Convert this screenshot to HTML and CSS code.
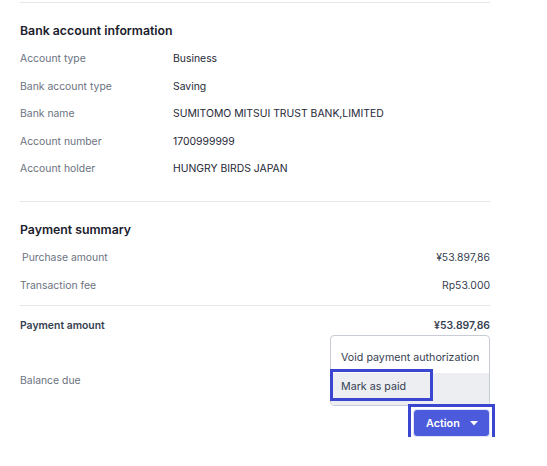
FILE: index.html
```html
<!DOCTYPE html>
<html lang="en">
<head>
<meta charset="utf-8">
<title>Payment details</title>
<link rel="stylesheet" href="styles.css">
</head>
<body>
<div class="page">
  <div class="rule rule-top"></div>
  <section class="sec sec-bank">
    <h2 class="sec-title">Bank account information</h2>
    <div class="kv">
      <div class="kv-row"><span class="kv-label">Account type</span><span class="kv-value">Business</span></div>
      <div class="kv-row"><span class="kv-label">Bank account type</span><span class="kv-value">Saving</span></div>
      <div class="kv-row"><span class="kv-label">Bank name</span><span class="kv-value">SUMITOMO MITSUI TRUST BANK,LIMITED</span></div>
      <div class="kv-row"><span class="kv-label">Account number</span><span class="kv-value">1700999999</span></div>
      <div class="kv-row"><span class="kv-label">Account holder</span><span class="kv-value">HUNGRY BIRDS JAPAN</span></div>
    </div>
  </section>
  <div class="rule"></div>
  <section class="sec sec-summary">
    <h2 class="sec-title">Payment summary</h2>
    <div class="sum-row sum-indent"><span class="sum-label">Purchase amount</span><span class="sum-value">¥53.897,86</span></div>
    <div class="sum-row"><span class="sum-label">Transaction fee</span><span class="sum-value">Rp53.000</span></div>
  </section>
  <div class="rule rule-summary"></div>
  <div class="sum-row sum-total"><span class="sum-label">Payment amount</span><span class="sum-value">¥53.897,86</span></div>
  <div class="sum-row sum-balance"><span class="sum-label">Balance due</span><span class="sum-value"></span></div>
  <div class="actions">
    <div class="action-wrap">
      <div class="menu">
        <div class="menu-item">Void payment authorization</div>
        <div class="menu-item menu-item-active">Mark as paid<span class="mark mark-item"></span></div>
      </div>
      <button class="btn-action" type="button">Action
        <svg class="caret" width="8" height="5" viewBox="0 0 8 5"><path d="M0 0h8L4 4.5z" fill="#fff"/></svg>
      </button>
      <span class="mark mark-btn"></span>
    </div>
  </div>
</div>
</body>
</html>
```

FILE: styles.css
```css
* { box-sizing: border-box; }
html, body { margin: 0; padding: 0; background: #fff; }
body {
  font-family: Inter, "Noto Sans", "Liberation Sans", sans-serif;
  color: #1f2937;
}
.page {
  width: 470px;
  margin-left: 20px;
}
.rule {
  height: 1px;
  background: #e5e7eb;
}
.rule-top { margin-top: 2px; }
.sec-bank { padding: 18px 0 18.5px; }
.sec-summary { padding: 18px 0 6px; }
.sec-title {
  margin: 0 0 4px;
  height: 20px;
  line-height: 20px;
  font-size: 12.3px;
  font-weight: 600;
  color: #1a202c;
}
.sec-summary .sec-title { margin-bottom: 3px; }
.kv-row {
  display: flex;
  height: 27.5px;
  align-items: center;
  font-size: 10.4px;
}
.kv-label {
  width: 153px;
  color: #6b7280;
}
.kv-value { color: #1f2937; }
.sum-row {
  display: flex;
  justify-content: space-between;
  align-items: center;
  height: 28px;
  font-size: 10.4px;
}
.sum-indent .sum-label { padding-left: 2px; }
.sum-label { color: #6b7280; }
.sum-value { color: #374151; }
.sum-total { margin-top: 5px; }
.sum-total .sum-label, .sum-total .sum-value {
  font-weight: 600;
  color: #374151;
}
.sum-balance { margin-top: 27px; }
.actions {
  display: flex;
  justify-content: flex-end;
  margin-top: 15px;
}
.action-wrap { position: relative; }
.btn-action {
  display: flex;
  align-items: center;
  gap: 10px;
  width: 77px;
  height: 28px;
  padding: 0 0 0 12px;
  border: 1px solid #dfe3fb;
  border-radius: 4px;
  background: #4b5bdc;
  color: #fff;
  font-family: inherit;
  font-size: 10.8px;
  font-weight: 600;
}
.caret { display: block; }
.mark {
  position: absolute;
  border: 3px solid #3a45d0;
  pointer-events: none;
}
.mark-btn {
  left: -5px; top: -5px; right: -5px; bottom: -5px;
}
.menu {
  position: absolute;
  right: 0;
  bottom: calc(100% + 3px);
  width: 160px;
  padding-top: 5px;
  border: 1px solid #c8cdd5;
  border-radius: 4px;
  background: #fff;
}
.menu-item {
  position: relative;
  height: 32px;
  line-height: 34px;
  padding-left: 10px;
  font-size: 10.7px;
  color: #374151;
  white-space: nowrap;
}
.menu-item-active {
  background: #eceef2;
  line-height: 27px;
  border-radius: 0 0 3px 3px;
}
.mark-item {
  left: -1px;
  top: -4px;
  width: 103px;
  height: 32px;
}
```
